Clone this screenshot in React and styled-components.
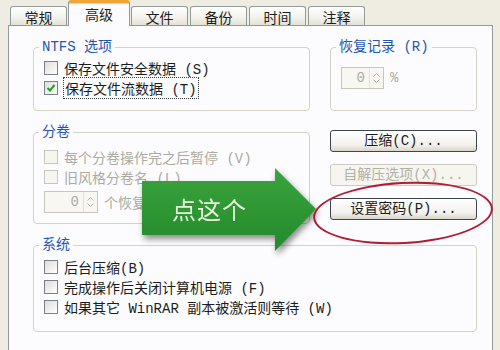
import React from 'react';
import styled, { createGlobalStyle, css } from 'styled-components';

const MONO = `"Liberation Mono", "Noto Sans CJK SC", monospace`;
const CJK = `"Noto Sans CJK SC", "Liberation Sans", sans-serif`;

const GlobalStyle = createGlobalStyle`
  html, body {
    margin: 0;
    padding: 0;
    background: #EFEDE2;
  }
  * {
    box-sizing: border-box;
  }
`;

const Window = styled.div`
  width: 500px;
  height: 350px;
  overflow: hidden;
  display: flex;
  flex-direction: column;
  background: #EFEDE2;
  font-family: ${MONO};
  font-size: 14px;
  color: #1c1c1c;
`;

const TabStrip = styled.div`
  position: relative;
  z-index: 1;
  display: flex;
  align-items: flex-end;
  height: 27px;
  padding-left: 10px;
`;

const Tab = styled.div`
  width: 57px;
  height: 19px;
  margin-right: 2px;
  border: 1px solid #919B9C;
  border-bottom: none;
  border-radius: 3px 3px 0 0;
  background: linear-gradient(#FFFFFF, #F4F3EE 55%, #E3E1D6);
  display: flex;
  justify-content: center;
  align-items: center;
  padding-top: 2px;
  font-family: ${CJK};
  font-size: 14px;
  line-height: 18px;

  ${p => p.$active && css`
    width: 62px;
    height: 26px;
    margin: 0 1px -1px -1px;
    background: #FCFCFE;
    border-top: 3px solid #F0A536;
    box-shadow: inset 0 1px 0 #FFD787;
    align-items: flex-start;
    padding-top: 2px;
  `}
`;

const Panel = styled.div`
  position: relative;
  flex: 1;
  min-height: 330px;
  margin: 0 7px 0 8px;
  padding: 13px 0 0 24px;
  background: #FCFCFE;
  border: 1px solid #919B9C;
`;

const Layout = styled.div`
  display: grid;
  grid-template-columns: 277px 147px;
  column-gap: 20px;
  row-gap: 13px;
`;

const Group = styled.fieldset`
  margin: 0;
  min-width: 0;
  padding: ${p => p.$pad || '3px 10px 12px'};
  border: 1px solid #D5D3C6;
  border-radius: 4px;
  ${p => p.$span && 'grid-column: 1 / -1;'}
`;

const Legend = styled.legend`
  margin-left: -5px;
  padding: 0 3px;
  font-size: 14px;
  line-height: 16px;
  color: #1F55B5;
`;

const Row = styled.div`
  display: flex;
  align-items: center;
  gap: 6px;
  height: ${p => p.$h || 20}px;
  margin-top: ${p => p.$mt || 0}px;
  color: ${p => (p.$disabled ? '#ADABA0' : '#1c1c1c')};
  white-space: nowrap;
`;

const Box = styled.span`
  flex: none;
  width: 14px;
  height: 14px;
  display: flex;
  align-items: center;
  justify-content: center;
  border: 1px solid ${p => (p.$disabled ? '#C9C7BC' : '#77828C')};
  background: ${p => (p.$disabled ? '#F6F5EF' : 'linear-gradient(135deg, #DEDDD6, #FFFFFF)')};
`;

const Focus = styled.span`
  outline: 1px dotted #3a3a3a;
  padding: 0 1px;
`;

const Spin = styled.div`
  display: flex;
  width: ${p => p.$w}px;
  height: 22px;
  border: 1px solid #C9C7BA;
  background: #F8F7F2;
`;

const SpinValue = styled.span`
  flex: 1;
  text-align: right;
  padding-right: 4px;
  line-height: 20px;
  color: #ADABA0;
`;

const SpinArrows = styled.span`
  width: 14px;
  display: flex;
  flex-direction: column;
  justify-content: center;
  align-items: center;
  gap: 2px;
  border-left: 1px solid #E3E1D6;
`;

const Actions = styled.div`
  display: flex;
  flex-direction: column;
  gap: 12px;
  padding-top: 6px;
`;

const Button = styled.button`
  width: 100%;
  height: 22px;
  padding: 0;
  border: 1px solid ${p => (p.disabled ? '#CDCBBF' : '#3C444C')};
  border-radius: 3px;
  background: ${p => (p.disabled
    ? '#F6F5F0'
    : 'linear-gradient(#FFFFFF, #F2F1EC 70%, #D9D5C9)')};
  font-family: ${MONO};
  font-size: 14px;
  line-height: 20px;
  color: ${p => (p.disabled ? '#B3B1A6' : '#1c1c1c')};
`;

const Pointer = styled.div`
  position: absolute;
  left: 133px;
  top: 142px;
  filter: drop-shadow(2px 4px 3px rgba(0, 0, 0, 0.45));
`;

const PointerShape = styled.div`
  width: 174px;
  height: 83px;
  display: flex;
  align-items: center;
  padding: 0 0 3px 30px;
  clip-path: polygon(0 13px, 133px 13px, 133px 0, 174px 41px, 133px 83px, 133px 67px, 0 67px);
  background: linear-gradient(#3AA43D, #24892B);
  font-family: ${CJK};
  font-size: 24px;
  color: #E9F6DE;
  letter-spacing: 1px;
`;

const Highlight = styled.div`
  position: absolute;
  left: 304px;
  top: 156px;
  width: 180px;
  height: 62px;
  border: 2.5px solid #B01E35;
  border-radius: 50%;
  transform: rotate(-3deg);
`;

const Check = () => (
  <svg width="10" height="10" viewBox="0 0 10 10">
    <path d="M1.5 5 L4 7.5 L8.5 2" fill="none" stroke="#21A121" strokeWidth="2" />
  </svg>
);

const Arrows = () => (
  <SpinArrows>
    <svg width="7" height="4" viewBox="0 0 7 4"><path d="M0.5 3.5 L3.5 0.5 L6.5 3.5" fill="none" stroke="#B9B7AC" /></svg>
    <svg width="7" height="4" viewBox="0 0 7 4"><path d="M0.5 0.5 L3.5 3.5 L6.5 0.5" fill="none" stroke="#B9B7AC" /></svg>
  </SpinArrows>
);

const CheckRow = ({ label, checked, disabled, focused }) => (
  <Row $disabled={disabled}>
    <Box $disabled={disabled}>{checked && <Check />}</Box>
    {focused ? <Focus>{label}</Focus> : <span>{label}</span>}
  </Row>
);

const tabs = ['常规', '高级', '文件', '备份', '时间', '注释'];

const App = () => (
  <>
    <GlobalStyle />
    <Window>
      <TabStrip>
        {tabs.map(t => <Tab key={t} $active={t === '高级'}>{t}</Tab>)}
      </TabStrip>
      <Panel>
        <Layout>
          <Group>
            <Legend>NTFS 选项</Legend>
            <CheckRow label="保存文件安全数据 (S)" />
            <CheckRow label="保存文件流数据 (T)" checked focused />
          </Group>
          <Group $pad="12px 10px 12px">
            <Legend>恢复记录 (R)</Legend>
            <Row $h={22} $disabled>
              <Spin $w={43}>
                <SpinValue>0</SpinValue>
                <Arrows />
              </Spin>
              <span>%</span>
            </Row>
          </Group>
          <Group $pad="7px 10px 10px">
            <Legend>分卷</Legend>
            <CheckRow label="每个分卷操作完之后暂停 (V)" disabled />
            <CheckRow label="旧风格分卷名 (L)" disabled />
            <Row $h={22} $mt={4} $disabled>
              <Spin $w={54}>
                <SpinValue>0</SpinValue>
                <Arrows />
              </Spin>
              <span>个恢复卷</span>
            </Row>
          </Group>
          <Actions>
            <Button>压缩(C)...</Button>
            <Button disabled>自解压选项(X)...</Button>
            <Button>设置密码(P)...</Button>
          </Actions>
          <Group $span $pad="4px 10px 14px">
            <Legend>系统</Legend>
            <CheckRow label="后台压缩(B)" />
            <CheckRow label="完成操作后关闭计算机电源 (F)" />
            <CheckRow label="如果其它 WinRAR 副本被激活则等待 (W)" />
          </Group>
        </Layout>
        <Pointer>
          <PointerShape>点这个</PointerShape>
        </Pointer>
        <Highlight />
      </Panel>
    </Window>
  </>
);

export default App;
